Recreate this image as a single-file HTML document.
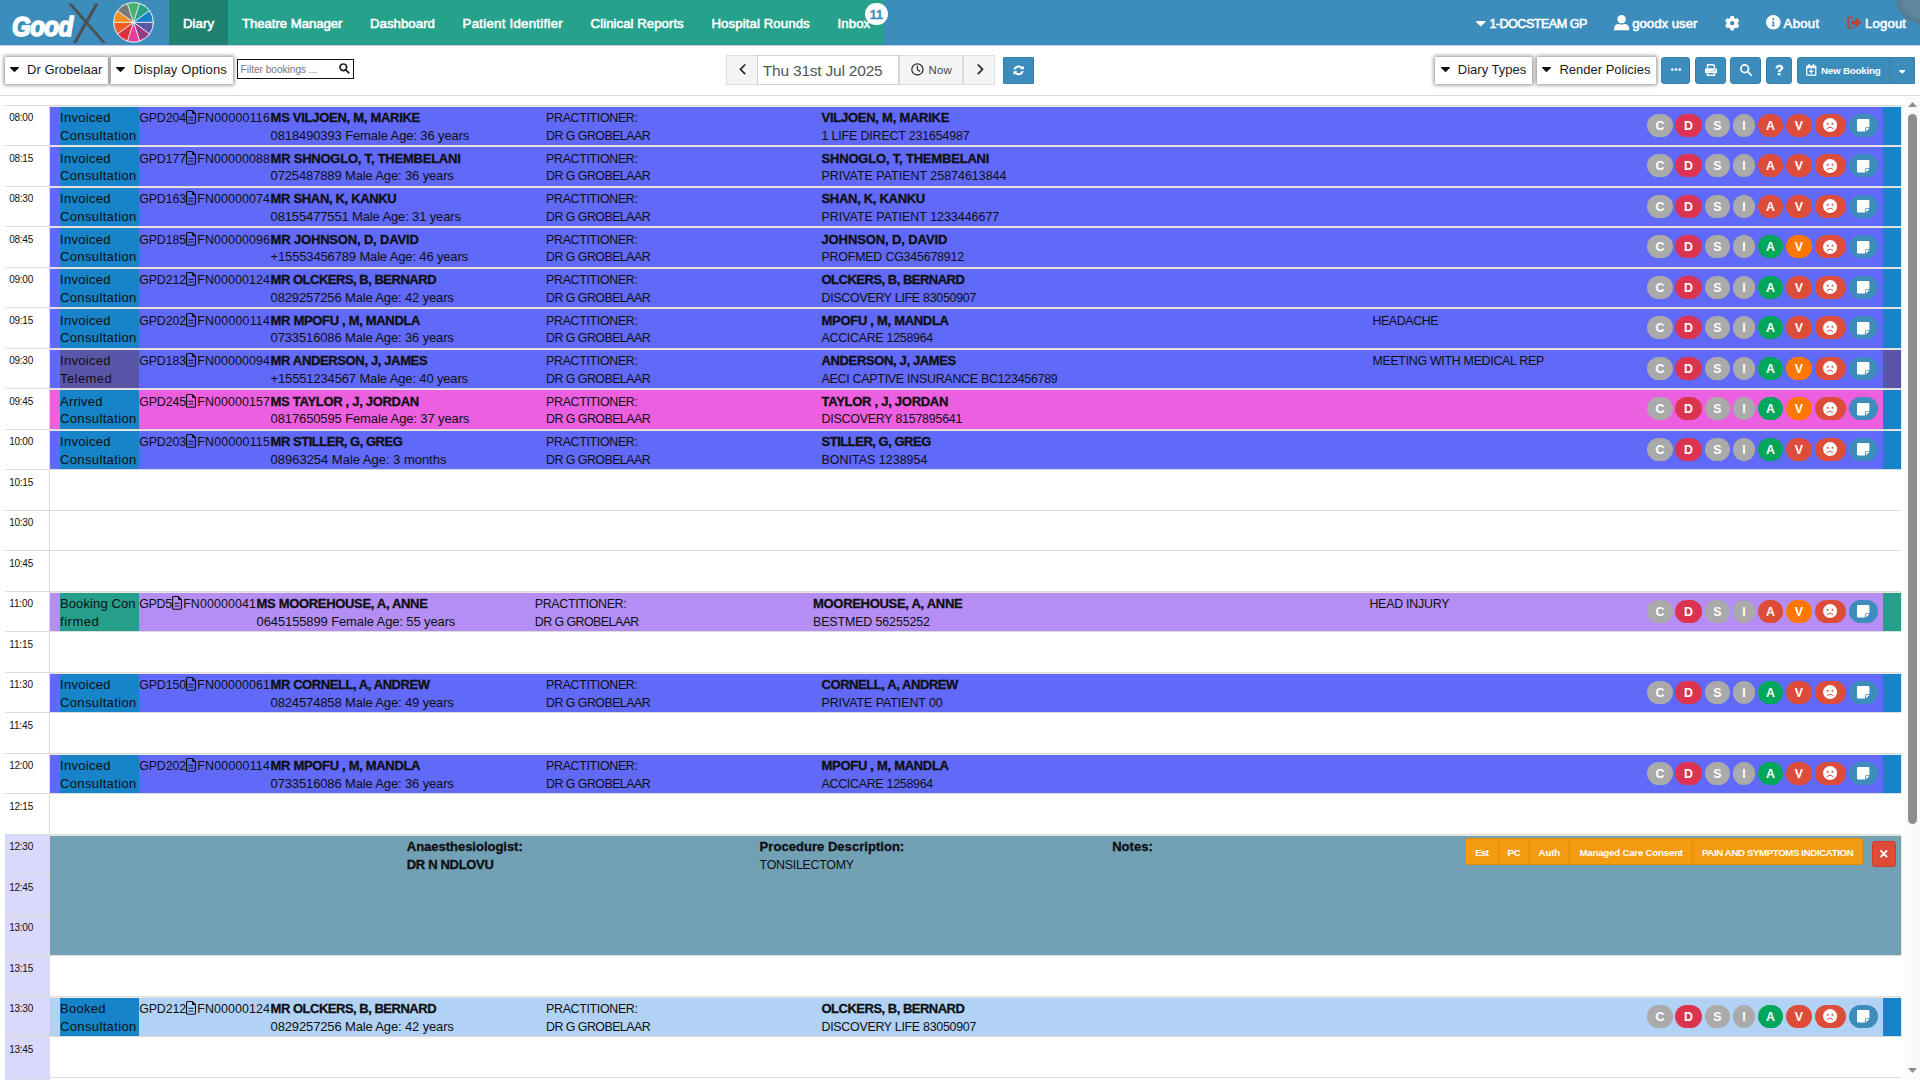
<!DOCTYPE html>
<html lang="en"><head><meta charset="utf-8"><title>GoodX Diary</title>
<style>
html,body{margin:0;padding:0;overflow:hidden}
body{width:1920px;height:1080px;overflow:hidden;position:relative;background:#fff;font-family:"Liberation Sans",sans-serif;color:#0e0f12}
.t{position:absolute;white-space:nowrap;color:#0e0f12}
.b{font-weight:700;-webkit-text-stroke:.3px currentColor}
.w{color:#fff}
svg{position:absolute;overflow:visible}
.dd{position:absolute;background:#fff;border-radius:0;box-shadow:0 0 4px 1px rgba(0,0,0,.45)}
.gb{position:absolute;background:#f4f4f4;border:1px solid #ddd;box-sizing:border-box}
.bb{position:absolute;background:#3c8dbc;border:1px solid #367fa9;box-sizing:border-box;border-radius:3px}
.bd{position:absolute;border-radius:11.5px;height:23px;line-height:24.6px;text-align:center;color:#fff;font-weight:700;font-size:12.4px}
.ob{position:absolute;background:#f39c12;box-sizing:border-box;height:26.4px;top:838.4px;border-left:1px solid #d98a0c}
.sb{-webkit-text-stroke:.55px currentColor}
.ns{-webkit-text-stroke:0}

</style></head>
<body>
<header class="main-header">
<div style="position:absolute;left:0.0px;top:0.0px;width:1920.0px;height:45.0px;background:#3c8dbc;"></div>
<div style="position:absolute;left:0.0px;top:45.0px;width:1920.0px;height:1.0px;background:#c9c4ee;"></div>
<div style="position:absolute;left:169.0px;top:0.0px;width:715.0px;height:45.0px;background:#26a28c;"></div>
<div style="position:absolute;left:169.0px;top:0.0px;width:59.0px;height:45.0px;background:#1f8270;"></div>
<div style="position:absolute;left:1894.5px;top:-29.5px;width:55px;height:54px;border-radius:50%;background:radial-gradient(closest-side,rgba(128,128,128,.5) 0,rgba(128,128,128,.5) 70%,rgba(105,112,122,.62) 88%,rgba(100,110,122,.55) 94%,rgba(100,110,122,0) 100%)"></div>
<span class="lg" style="position:absolute;left:11.5px;top:10.5px;font:italic 700 27.5px/32px 'Liberation Sans',sans-serif;color:#fff;letter-spacing:-0.5px;-webkit-text-stroke:1.7px #fff;white-space:nowrap;transform:scaleX(.87);transform-origin:0 0">Good</span>
<span class="lgx" style="position:absolute;left:68px;top:-5.5px;font:200 54px/60px 'DejaVu Sans Light','DejaVu Sans',sans-serif;color:#4d4f52;-webkit-text-stroke:.2px #4d4f52;white-space:nowrap;transform:skewX(9deg) scaleX(1.06);transform-origin:50% 50%">X</span>
<svg style="left:0;top:0" width="170" height="45"><circle cx="133.5" cy="22.3" r="20.25" fill="#dfe6ec"/><path d="M133.5 22.3L153.20 22.30A19.7 19.7 0 0 1 149.44 33.88Z" fill="#5b57a7" stroke="#e3e9ef" stroke-width=".85"/><path d="M133.5 22.3L149.44 33.88A19.7 19.7 0 0 1 139.59 41.04Z" fill="#9b3b84" stroke="#e3e9ef" stroke-width=".85"/><path d="M133.5 22.3L139.59 41.04A19.7 19.7 0 0 1 127.41 41.04Z" fill="#e83a97" stroke="#e3e9ef" stroke-width=".85"/><path d="M133.5 22.3L127.41 41.04A19.7 19.7 0 0 1 117.56 33.88Z" fill="#e0313f" stroke="#e3e9ef" stroke-width=".85"/><path d="M133.5 22.3L117.56 33.88A19.7 19.7 0 0 1 113.80 22.30Z" fill="#f15b22" stroke="#e3e9ef" stroke-width=".85"/><path d="M133.5 22.3L113.80 22.30A19.7 19.7 0 0 1 117.56 10.72Z" fill="#f29120" stroke="#e3e9ef" stroke-width=".85"/><path d="M133.5 22.3L117.56 10.72A19.7 19.7 0 0 1 127.41 3.56Z" fill="#787878" stroke="#e3e9ef" stroke-width=".85"/><path d="M133.5 22.3L127.41 3.56A19.7 19.7 0 0 1 139.59 3.56Z" fill="#46b36a" stroke="#e3e9ef" stroke-width=".85"/><path d="M133.5 22.3L139.59 3.56A19.7 19.7 0 0 1 149.44 10.72Z" fill="#27a189" stroke="#e3e9ef" stroke-width=".85"/><path d="M133.5 22.3L149.44 10.72A19.7 19.7 0 0 1 153.20 22.30Z" fill="#1681c9" stroke="#e3e9ef" stroke-width=".85"/><circle cx="133.5" cy="22.3" r="1.6" fill="#dfe6ec"/></svg>
<span class="t sb" style="left:183.0px;top:15.6px;font-size:13.2px;line-height:15px;letter-spacing:0.08px;color:#fff;">Diary</span>
<span class="t sb" style="left:242.0px;top:15.6px;font-size:13.2px;line-height:15px;letter-spacing:-0.05px;color:#fff;">Theatre Manager</span>
<span class="t sb" style="left:370.0px;top:15.6px;font-size:13.2px;line-height:15px;letter-spacing:0.05px;color:#fff;">Dashboard</span>
<span class="t sb" style="left:462.6px;top:15.6px;font-size:13.2px;line-height:15px;letter-spacing:0.28px;color:#fff;">Patient Identifier</span>
<span class="t sb" style="left:590.6px;top:15.6px;font-size:13.2px;line-height:15px;letter-spacing:0.05px;color:#fff;">Clinical Reports</span>
<span class="t sb" style="left:711.5px;top:15.6px;font-size:13.2px;line-height:15px;letter-spacing:0.10px;color:#fff;">Hospital Rounds</span>
<span class="t sb" style="left:837.5px;top:15.6px;font-size:13.2px;line-height:15px;letter-spacing:0.11px;color:#fff;">Inbox</span>
<div style="position:absolute;left:865.1px;top:2.6px;width:22.6px;height:22.6px;border-radius:50%;background:#fff"></div>
<span class="t b" style="left:869.7px;top:7.6px;font-size:12.6px;line-height:14px;letter-spacing:0.04px;color:#3c8dbc;">11</span>
<span class="t sb" style="left:1489.4px;top:16.6px;font-size:12.6px;line-height:14px;letter-spacing:-0.53px;color:#fff;">1-DOCSTEAM GP</span>
<span class="t sb" style="left:1632.2px;top:15.6px;font-size:13.2px;line-height:15px;letter-spacing:0.00px;color:#fff;">goodx user</span>
<span class="t sb" style="left:1783.6px;top:15.6px;font-size:13.2px;line-height:15px;letter-spacing:0.27px;color:#fff;">About</span>
<span class="t sb" style="left:1865.0px;top:15.6px;font-size:13.2px;line-height:15px;letter-spacing:0.14px;color:#fff;">Logout</span>
<svg style="left:1476.4px;top:20.6px" width="9.6" height="5.4" viewBox="0 0 10 5.6"><path d="M.6 0h8.8a.6.6 0 0 1 .45 1L5.5 5.3a.7.7 0 0 1-1 0L.15 1A.6.6 0 0 1 .6 0z" fill="#fff"/></svg>
<svg style="left:1614.4px;top:15.2px" width="15.2" height="15.2" viewBox="0 0 16 16"><circle cx="8" cy="4.4" r="4.4" fill="#fff"/><path d="M0 16v-1.6C0 11.6 2.2 9.6 4.8 9.6h.7a6 6 0 0 0 5 0h.7c2.600 0 4.800 2 4.800 4.800V16z" fill="#fff"/></svg>
<svg style="left:1724.9px;top:15.6px" width="14.4" height="14.4" viewBox="-8 -8 16 16"><g fill="#fff"><rect x="-2.1" y="-8" width="4.2" height="5" rx=".9" transform="rotate(0)"/><rect x="-2.1" y="-8" width="4.2" height="5" rx=".9" transform="rotate(60)"/><rect x="-2.1" y="-8" width="4.2" height="5" rx=".9" transform="rotate(120)"/><rect x="-2.1" y="-8" width="4.2" height="5" rx=".9" transform="rotate(180)"/><rect x="-2.1" y="-8" width="4.2" height="5" rx=".9" transform="rotate(240)"/><rect x="-2.1" y="-8" width="4.2" height="5" rx=".9" transform="rotate(300)"/><path fill-rule="evenodd" d="M0-6.400A6.400 6.400 0 1 0 0 6.400 6.400 6.400 0 1 0 0-6.400zM0-2.400A2.400 2.400 0 1 1 0 2.400 2.400 2.400 0 1 1 0-2.400z"/></g></svg>
<svg style="left:1766px;top:15.3px" width="14.6" height="14.6" viewBox="0 0 16 16"><circle cx="8" cy="8" r="8" fill="#fff"/><circle cx="8" cy="4.500" r="1.150" fill="#3c8dbc"/><path d="M6.600 7h2.300v4.200h.8v1.200H6.400v-1.200h.8V8.200h-.6z" fill="#3c8dbc"/></svg>
<svg style="left:1846.6px;top:16.2px" width="14.4" height="13" viewBox="0 0 16 14"><path d="M5.600 1.200H3A1.800 1.800 0 0 0 1.200 3v8A1.800 1.800 0 0 0 3 12.800h2.600" fill="none" stroke="#c2403a" stroke-width="2" stroke-linecap="round"/><path d="M10.300 1.800L15.500 6.500a.7.700 0 0 1 0 1L10.300 12.200a.6.600 0 0 1-1-.5V9.300H5.600a.6.600 0 0 1-.6-.6V5.300a.6.600 0 0 1 .6-.6h3.700V2.300a.6.600 0 0 1 1-.5z" fill="#c2403a"/></svg>
</header>
<section class="diary-toolbar">
<div class="dd" style="left:5px;top:57px;width:103px;height:27px"></div>
<svg style="left:10.2px;top:67.2px" width="9" height="5.200" viewBox="0 0 10 5.6"><path d="M.6 0h8.8a.6.6 0 0 1 .45 1L5.500 5.300a.7.700 0 0 1-1 0L.15 1A.6.600 0 0 1 .6 0z" fill="#111"/></svg>
<span class="t" style="left:27.0px;top:62.2px;font-size:13px;line-height:15px;letter-spacing:0.02px;color:#1b1b1b;">Dr Grobelaar</span>
<div class="dd" style="left:111.2px;top:57px;width:121.8px;height:27px"></div>
<svg style="left:116.4px;top:67.2px" width="9" height="5.200" viewBox="0 0 10 5.6"><path d="M.6 0h8.8a.6.6 0 0 1 .45 1L5.500 5.300a.7.700 0 0 1-1 0L.15 1A.6.600 0 0 1 .6 0z" fill="#111"/></svg>
<span class="t" style="left:133.8px;top:62.2px;font-size:13px;line-height:15px;letter-spacing:0.14px;color:#1b1b1b;">Display Options</span>
<div class="dd" style="left:1434.8px;top:57px;width:97.2px;height:27px"></div>
<svg style="left:1441.4px;top:67.2px" width="9" height="5.200" viewBox="0 0 10 5.6"><path d="M.6 0h8.8a.6.6 0 0 1 .45 1L5.500 5.300a.7.700 0 0 1-1 0L.15 1A.6.600 0 0 1 .6 0z" fill="#111"/></svg>
<span class="t" style="left:1457.8px;top:62.2px;font-size:13px;line-height:15px;letter-spacing:-0.00px;color:#1b1b1b;">Diary Types</span>
<div class="dd" style="left:1537px;top:57px;width:119.2px;height:27px"></div>
<svg style="left:1542.4px;top:67.2px" width="9" height="5.200" viewBox="0 0 10 5.6"><path d="M.6 0h8.8a.6.6 0 0 1 .45 1L5.500 5.300a.7.700 0 0 1-1 0L.15 1A.6.600 0 0 1 .6 0z" fill="#111"/></svg>
<span class="t" style="left:1559.4px;top:62.2px;font-size:13px;line-height:15px;letter-spacing:-0.00px;color:#1b1b1b;">Render Policies</span>
<div style="position:absolute;left:237px;top:59.2px;width:117px;height:19.6px;border:1px solid #111;box-sizing:border-box;background:#fff"></div>
<span class="t" style="left:240.6px;top:63.6px;font-size:10.2px;line-height:11px;letter-spacing:-0.05px;color:#777;">Filter bookings ...</span>
<svg style="left:339px;top:63.4px" width="10.6" height="10.6" viewBox="0 0 16 16"><circle cx="6.500" cy="6.500" r="5" fill="none" stroke="#222" stroke-width="2.600"/><path d="M10.300 10.300L14.800 14.800" stroke="#222" stroke-width="2.800" stroke-linecap="round"/></svg>
<div class="gb" style="left:726.2px;top:55px;width:31.6px;height:30.4px"></div>
<div style="position:absolute;left:756.8px;top:55px;width:142px;height:30.4px;border:1px solid #cfcfcf;box-sizing:border-box;background:#fff"></div>
<div class="gb" style="left:899px;top:55px;width:64px;height:30.4px"></div>
<div class="gb" style="left:963px;top:55px;width:32.200px;height:30.4px"></div>
<svg style="left:738.6px;top:64px" width="7" height="10.6" viewBox="0 0 7 10.6"><path d="M5.700 1L1.500 5.300L5.700 9.600" fill="none" stroke="#2a2a2a" stroke-width="1.750" stroke-linecap="round" stroke-linejoin="miter"/></svg>
<svg style="left:976.6px;top:64px" width="7" height="10.6" viewBox="0 0 7 10.6"><path d="M1.300 1L5.500 5.300L1.300 9.600" fill="none" stroke="#2a2a2a" stroke-width="1.750" stroke-linecap="round" stroke-linejoin="miter"/></svg>
<span class="t" style="left:762.8px;top:61.6px;font-size:15.5px;line-height:17px;letter-spacing:-0.21px;color:#555;">Thu 31st Jul 2025</span>
<svg style="left:910.8px;top:63.2px" width="12.8" height="12.800" viewBox="0 0 16 16"><circle cx="8" cy="8" r="7" fill="none" stroke="#333" stroke-width="1.600"/><path d="M8 3.800V8.300L10.800 10.300" fill="none" stroke="#333" stroke-width="1.600" stroke-linecap="round"/></svg>
<span class="t" style="left:928.6px;top:64.0px;font-size:11.4px;line-height:12px;letter-spacing:0.20px;color:#444;">Now</span>
<div class="bb" style="left:1003.2px;top:57.1px;width:31px;height:26.7px;border-radius:1px"></div>
<svg style="left:1013.2px;top:64.6px" width="11.400" height="10.600" viewBox="0 0 16 16" preserveAspectRatio="none"><path d="M2.300 6.800A5.900 5.900 0 0 1 12.500 4.200" fill="none" stroke="#fff" stroke-width="3"/><path d="M15.300 1v5.600H9.700z" fill="#fff"/><path d="M13.700 9.200A5.900 5.900 0 0 1 3.500 11.800" fill="none" stroke="#fff" stroke-width="3"/><path d="M.7 15V9.400H6.300z" fill="#fff"/></svg>
<div class="bb" style="left:1661.4px;top:57px;width:28.2px;height:27px"></div>
<div class="bb" style="left:1695.2px;top:57px;width:30.4px;height:27px"></div>
<div class="bb" style="left:1730px;top:57px;width:30.6px;height:27px"></div>
<div class="bb" style="left:1766px;top:57px;width:25.6px;height:27px"></div>
<div class="bb" style="left:1797px;top:57px;width:117.800px;height:27px;border-radius:3px 0 0 3px"></div>
<div style="position:absolute;left:1889.0px;top:57.0px;width:1.0px;height:27.0px;background:#367fa9;"></div>
<svg style="left:1670.8px;top:68.1px" width="10.200" height="3" viewBox="0 0 10.200 3"><circle cx="1.400" cy="1.500" r="1.350" fill="#fff"/><circle cx="5.100" cy="1.500" r="1.350" fill="#fff"/><circle cx="8.800" cy="1.500" r="1.350" fill="#fff"/></svg>
<svg style="left:1704.8px;top:64px" width="12" height="12" viewBox="0 0 16 16"><path d="M3.400 5V1h7.700l1.500 1.500V5" fill="none" stroke="#fff" stroke-width="2"/><path d="M1.800 5.600h12.400A1.800 1.800 0 0 1 16 7.400v4.400a.6.600 0 0 1-.6.600H13.500V10h-11v2.400H.6a.6.600 0 0 1-.6-.6V7.400A1.800 1.800 0 0 1 1.800 5.600z" fill="#fff"/><path d="M3.400 11h9.200v4H3.400z" fill="none" stroke="#fff" stroke-width="2"/><circle cx="13.300" cy="8" r=".9" fill="#3c8dbc"/></svg>
<svg style="left:1740px;top:64px" width="12" height="12" viewBox="0 0 16 16"><circle cx="6.300" cy="6.300" r="5.100" fill="none" stroke="#fff" stroke-width="2.300"/><path d="M10.200 10.200L15 15" stroke="#fff" stroke-width="2.300" stroke-linecap="round"/></svg>
<span class="t b" style="left:1775.1px;top:62.1px;font-size:14.2px;line-height:16px;letter-spacing:-1.07px;color:#fff;">?</span>
<svg style="left:1806.2px;top:64.1px" width="10.500" height="11.800" viewBox="0 0 14 16"><path fill-rule="evenodd" d="M3 0h2v2h4V0h2v2h1.500A1.500 1.500 0 0 1 14 3.500v11A1.500 1.500 0 0 1 12.500 16h-11A1.500 1.500 0 0 1 0 14.500v-11A1.500 1.500 0 0 1 1.500 2H3zM1.700 5.700v8.600h10.600V5.700zM6.100 7h1.800v2.100H10v1.800H7.900V13H6.100v-2.100H4V9.100h2.100z" fill="#fff"/></svg>
<span class="t b ns" style="left:1821.0px;top:65.0px;font-size:9.8px;line-height:11px;letter-spacing:-0.22px;color:#fff;">New Booking</span>
<svg style="left:1898.8px;top:69.8px" width="6.400" height="3.600" viewBox="0 0 10 5.600"><path d="M.6 0h8.800a.6.600 0 0 1 .45 1L5.500 5.300a.7.700 0 0 1-1 0L.15 1A.6.600 0 0 1 .6 0z" fill="#fff"/></svg>
<div style="position:absolute;left:0.0px;top:95.0px;width:1920.0px;height:1.0px;background:#dcdcdc;"></div>
</section>
<main class="diary-grid">
<div style="position:absolute;left:5.0px;top:834.0px;width:45.0px;height:246.0px;background:#d9d8fd;"></div>
<div style="position:absolute;left:49.2px;top:105.0px;width:1.0px;height:975.0px;background:#dadad8;"></div>
<div style="position:absolute;left:5.0px;top:105.0px;width:1896.0px;height:1.0px;background:#dcdcdc;"></div>
<span class="t" style="left:9.2px;top:112.2px;font-size:10px;line-height:11px;letter-spacing:-0.25px;color:#111;">08:00</span>
<div style="position:absolute;left:5.0px;top:145.0px;width:1896.0px;height:1.0px;background:#dcdcdc;"></div>
<span class="t" style="left:9.2px;top:153.2px;font-size:10px;line-height:11px;letter-spacing:-0.25px;color:#111;">08:15</span>
<div style="position:absolute;left:5.0px;top:186.0px;width:1896.0px;height:1.0px;background:#dcdcdc;"></div>
<span class="t" style="left:9.2px;top:193.2px;font-size:10px;line-height:11px;letter-spacing:-0.25px;color:#111;">08:30</span>
<div style="position:absolute;left:5.0px;top:226.0px;width:1896.0px;height:1.0px;background:#dcdcdc;"></div>
<span class="t" style="left:9.2px;top:234.2px;font-size:10px;line-height:11px;letter-spacing:-0.25px;color:#111;">08:45</span>
<div style="position:absolute;left:5.0px;top:267.0px;width:1896.0px;height:1.0px;background:#dcdcdc;"></div>
<span class="t" style="left:9.2px;top:274.2px;font-size:10px;line-height:11px;letter-spacing:-0.25px;color:#111;">09:00</span>
<div style="position:absolute;left:5.0px;top:307.0px;width:1896.0px;height:1.0px;background:#dcdcdc;"></div>
<span class="t" style="left:9.2px;top:315.2px;font-size:10px;line-height:11px;letter-spacing:-0.25px;color:#111;">09:15</span>
<div style="position:absolute;left:5.0px;top:348.0px;width:1896.0px;height:1.0px;background:#dcdcdc;"></div>
<span class="t" style="left:9.2px;top:355.2px;font-size:10px;line-height:11px;letter-spacing:-0.25px;color:#111;">09:30</span>
<div style="position:absolute;left:5.0px;top:388.0px;width:1896.0px;height:1.0px;background:#dcdcdc;"></div>
<span class="t" style="left:9.2px;top:396.2px;font-size:10px;line-height:11px;letter-spacing:-0.25px;color:#111;">09:45</span>
<div style="position:absolute;left:5.0px;top:429.0px;width:1896.0px;height:1.0px;background:#dcdcdc;"></div>
<span class="t" style="left:9.2px;top:436.2px;font-size:10px;line-height:11px;letter-spacing:-0.25px;color:#111;">10:00</span>
<div style="position:absolute;left:5.0px;top:469.0px;width:1896.0px;height:1.0px;background:#dcdcdc;"></div>
<span class="t" style="left:9.2px;top:477.2px;font-size:10px;line-height:11px;letter-spacing:-0.25px;color:#111;">10:15</span>
<div style="position:absolute;left:5.0px;top:510.0px;width:1896.0px;height:1.0px;background:#dcdcdc;"></div>
<span class="t" style="left:9.2px;top:517.2px;font-size:10px;line-height:11px;letter-spacing:-0.25px;color:#111;">10:30</span>
<div style="position:absolute;left:5.0px;top:550.0px;width:1896.0px;height:1.0px;background:#dcdcdc;"></div>
<span class="t" style="left:9.2px;top:558.2px;font-size:10px;line-height:11px;letter-spacing:-0.25px;color:#111;">10:45</span>
<div style="position:absolute;left:5.0px;top:591.0px;width:1896.0px;height:1.0px;background:#dcdcdc;"></div>
<span class="t" style="left:9.2px;top:598.2px;font-size:10px;line-height:11px;letter-spacing:-0.10px;color:#111;">11:00</span>
<div style="position:absolute;left:5.0px;top:631.0px;width:1896.0px;height:1.0px;background:#dcdcdc;"></div>
<span class="t" style="left:9.2px;top:639.2px;font-size:10px;line-height:11px;letter-spacing:-0.10px;color:#111;">11:15</span>
<div style="position:absolute;left:5.0px;top:672.0px;width:1896.0px;height:1.0px;background:#dcdcdc;"></div>
<span class="t" style="left:9.2px;top:679.2px;font-size:10px;line-height:11px;letter-spacing:-0.10px;color:#111;">11:30</span>
<div style="position:absolute;left:5.0px;top:712.0px;width:1896.0px;height:1.0px;background:#dcdcdc;"></div>
<span class="t" style="left:9.2px;top:720.2px;font-size:10px;line-height:11px;letter-spacing:-0.10px;color:#111;">11:45</span>
<div style="position:absolute;left:5.0px;top:753.0px;width:1896.0px;height:1.0px;background:#dcdcdc;"></div>
<span class="t" style="left:9.2px;top:760.2px;font-size:10px;line-height:11px;letter-spacing:-0.25px;color:#111;">12:00</span>
<div style="position:absolute;left:5.0px;top:793.0px;width:1896.0px;height:1.0px;background:#dcdcdc;"></div>
<span class="t" style="left:9.2px;top:801.2px;font-size:10px;line-height:11px;letter-spacing:-0.25px;color:#111;">12:15</span>
<div style="position:absolute;left:5.0px;top:834.0px;width:1896.0px;height:1.0px;background:#dcdcdc;"></div>
<span class="t" style="left:9.2px;top:841.2px;font-size:10px;line-height:11px;letter-spacing:-0.25px;color:#111;">12:30</span>
<div style="position:absolute;left:5.0px;top:874.0px;width:1896.0px;height:1.0px;background:#dcdcdc;"></div>
<span class="t" style="left:9.2px;top:882.2px;font-size:10px;line-height:11px;letter-spacing:-0.25px;color:#111;">12:45</span>
<div style="position:absolute;left:5.0px;top:915.0px;width:1896.0px;height:1.0px;background:#dcdcdc;"></div>
<span class="t" style="left:9.2px;top:922.2px;font-size:10px;line-height:11px;letter-spacing:-0.25px;color:#111;">13:00</span>
<div style="position:absolute;left:5.0px;top:955.0px;width:1896.0px;height:1.0px;background:#dcdcdc;"></div>
<span class="t" style="left:9.2px;top:963.2px;font-size:10px;line-height:11px;letter-spacing:-0.25px;color:#111;">13:15</span>
<div style="position:absolute;left:5.0px;top:996.0px;width:1896.0px;height:1.0px;background:#dcdcdc;"></div>
<span class="t" style="left:9.2px;top:1003.2px;font-size:10px;line-height:11px;letter-spacing:-0.25px;color:#111;">13:30</span>
<div style="position:absolute;left:5.0px;top:1036.0px;width:1896.0px;height:1.0px;background:#dcdcdc;"></div>
<span class="t" style="left:9.2px;top:1044.2px;font-size:10px;line-height:11px;letter-spacing:-0.25px;color:#111;">13:45</span>
<div style="position:absolute;left:5.0px;top:1077.0px;width:1896.0px;height:1.0px;background:#dcdcdc;"></div>
<div style="position:absolute;left:50.0px;top:106.0px;width:1852.0px;height:39.0px;background:#ece7df;"></div>
<div style="position:absolute;left:50.0px;top:105.0px;width:1851.0px;height:1.0px;background:#dcdcdc;"></div>
<div style="position:absolute;left:50.0px;top:107.0px;width:1851.0px;height:38.0px;background:#6069f8;"></div>
<div style="position:absolute;left:60.0px;top:107.0px;width:79.0px;height:38.0px;background:#1783c9;"></div>
<div style="position:absolute;left:1883.0px;top:107.0px;width:18.0px;height:38.0px;background:#1783c9;"></div>
<span class="t" style="left:60.0px;top:110.4px;font-size:13px;line-height:15px;letter-spacing:0.29px;">Invoiced</span>
<span class="t" style="left:60.0px;top:128.4px;font-size:13px;line-height:15px;letter-spacing:0.36px;">Consultation</span>
<span class="t" style="left:139.2px;top:111.4px;font-size:12.4px;line-height:14px;letter-spacing:-0.13px;">GPD204</span>
<svg style="left:185.7px;top:110.0px" width="10" height="13.800" viewBox="0 0 10 13.800"><path d="M1.700.55H6.300L9.450 3.700V12.100a1.150 1.150 0 0 1-1.150 1.150H1.700A1.150 1.150 0 0 1 .55 12.100V1.700A1.150 1.150 0 0 1 1.700.55z" fill="none" stroke="#0e0f12" stroke-width="1.100"/><path d="M6.100.4L9.600 3.900H6.100z" fill="#0e0f12"/><path d="M2.500 7.300h5" stroke="#0e0f12" stroke-width="1"/><path d="M2.500 10.100h5" stroke="#0e0f12" stroke-opacity=".6" stroke-width="1.400"/></svg>
<span class="t" style="left:197.3px;top:111.4px;font-size:12.4px;line-height:14px;letter-spacing:0.20px;">FN00000116</span>
<span class="t b" style="left:270.6px;top:110.4px;font-size:13px;line-height:15px;letter-spacing:-0.28px;">MS VILJOEN, M, MARIKE</span>
<span class="t" style="left:270.6px;top:128.4px;font-size:13px;line-height:15px;letter-spacing:-0.12px;">0818490393 Female Age: 36 years</span>
<span class="t" style="left:546.1px;top:111.4px;font-size:12.4px;line-height:14px;letter-spacing:-0.32px;">PRACTITIONER:</span>
<span class="t" style="left:546.1px;top:129.4px;font-size:12.4px;line-height:14px;letter-spacing:-0.54px;">DR G GROBELAAR</span>
<span class="t b" style="left:821.5px;top:110.4px;font-size:13px;line-height:15px;letter-spacing:-0.25px;">VILJOEN, M, MARIKE</span>
<span class="t" style="left:821.5px;top:129.4px;font-size:12.4px;line-height:14px;letter-spacing:-0.14px;">1 LIFE DIRECT 231654987</span>
<div class="bd" style="left:1647px;top:113.9px;width:26px;background:#aaaaaa">C</div>
<div class="bd" style="left:1675px;top:113.9px;width:27.1px;background:#dc3350">D</div>
<div class="bd" style="left:1704.8px;top:113.9px;width:25.2px;background:#aaaaaa">S</div>
<div class="bd" style="left:1732.9px;top:113.9px;width:22.3px;background:#aaaaaa">I</div>
<div class="bd" style="left:1757.9px;top:113.9px;width:25.3px;background:#dd4b39">A</div>
<div class="bd" style="left:1785.8px;top:113.9px;width:26.2px;background:#dd4b39">V</div>
<div class="bd" style="left:1815px;top:113.9px;width:30.9px;background:#dd4b39"></div>
<svg style="left:1823.0px;top:118.3px" width="14.200" height="14.200" viewBox="0 0 16 16"><circle cx="8" cy="8" r="7.900" fill="#fff"/><circle cx="5.300" cy="6.400" r="1.100" fill="#dd4b39"/><circle cx="10.700" cy="6.400" r="1.100" fill="#dd4b39"/><path d="M4.700 12.100A3.900 3.900 0 0 1 11.300 12.100" fill="none" stroke="#dd4b39" stroke-width="1.100" stroke-linecap="round"/></svg>
<div class="bd" style="left:1849.100px;top:113.9px;width:28.700px;background:#3c8dbc"></div>
<svg style="left:1857.0px;top:119.2px" width="12.400" height="12.400" viewBox="0 0 16 16"><path d="M1.600 0H14.400A1.600 1.600 0 0 1 16 1.600V10.500H12A1.500 1.500 0 0 0 10.500 12V16H1.600A1.600 1.600 0 0 1 0 14.400V1.600A1.600 1.600 0 0 1 1.600 0z" fill="#fff"/><path d="M11.600 16V12.200a.6.600 0 0 1 .6-.6H16z" fill="#fff"/></svg>
<div style="position:absolute;left:50.0px;top:146.0px;width:1852.0px;height:40.0px;background:#ece7df;"></div>
<div style="position:absolute;left:50.0px;top:145.0px;width:1851.0px;height:1.0px;background:#dcdcdc;"></div>
<div style="position:absolute;left:50.0px;top:147.0px;width:1851.0px;height:39.0px;background:#6069f8;"></div>
<div style="position:absolute;left:60.0px;top:147.0px;width:79.0px;height:39.0px;background:#1783c9;"></div>
<div style="position:absolute;left:1883.0px;top:147.0px;width:18.0px;height:39.0px;background:#1783c9;"></div>
<span class="t" style="left:60.0px;top:151.4px;font-size:13px;line-height:15px;letter-spacing:0.29px;">Invoiced</span>
<span class="t" style="left:60.0px;top:168.4px;font-size:13px;line-height:15px;letter-spacing:0.36px;">Consultation</span>
<span class="t" style="left:139.2px;top:152.4px;font-size:12.4px;line-height:14px;letter-spacing:-0.13px;">GPD177</span>
<svg style="left:185.7px;top:151.0px" width="10" height="13.800" viewBox="0 0 10 13.800"><path d="M1.700.55H6.300L9.450 3.700V12.100a1.150 1.150 0 0 1-1.150 1.150H1.700A1.150 1.150 0 0 1 .55 12.100V1.700A1.150 1.150 0 0 1 1.700.55z" fill="none" stroke="#0e0f12" stroke-width="1.100"/><path d="M6.100.4L9.600 3.900H6.100z" fill="#0e0f12"/><path d="M2.500 7.300h5" stroke="#0e0f12" stroke-width="1"/><path d="M2.500 10.100h5" stroke="#0e0f12" stroke-opacity=".6" stroke-width="1.400"/></svg>
<span class="t" style="left:197.3px;top:152.4px;font-size:12.4px;line-height:14px;letter-spacing:0.11px;">FN00000088</span>
<span class="t b" style="left:270.6px;top:151.4px;font-size:13px;line-height:15px;letter-spacing:-0.23px;">MR SHNOGLO, T, THEMBELANI</span>
<span class="t" style="left:270.6px;top:168.4px;font-size:13px;line-height:15px;letter-spacing:-0.14px;">0725487889 Male Age: 36 years</span>
<span class="t" style="left:546.1px;top:152.4px;font-size:12.4px;line-height:14px;letter-spacing:-0.32px;">PRACTITIONER:</span>
<span class="t" style="left:546.1px;top:169.4px;font-size:12.4px;line-height:14px;letter-spacing:-0.54px;">DR G GROBELAAR</span>
<span class="t b" style="left:821.5px;top:151.4px;font-size:13px;line-height:15px;letter-spacing:-0.19px;">SHNOGLO, T, THEMBELANI</span>
<span class="t" style="left:821.5px;top:169.4px;font-size:12.4px;line-height:14px;letter-spacing:0.03px;">PRIVATE PATIENT 25874613844</span>
<div class="bd" style="left:1647px;top:154.4px;width:26px;background:#aaaaaa">C</div>
<div class="bd" style="left:1675px;top:154.4px;width:27.1px;background:#dc3350">D</div>
<div class="bd" style="left:1704.8px;top:154.4px;width:25.2px;background:#aaaaaa">S</div>
<div class="bd" style="left:1732.9px;top:154.4px;width:22.3px;background:#aaaaaa">I</div>
<div class="bd" style="left:1757.9px;top:154.4px;width:25.3px;background:#dd4b39">A</div>
<div class="bd" style="left:1785.8px;top:154.4px;width:26.2px;background:#dd4b39">V</div>
<div class="bd" style="left:1815px;top:154.4px;width:30.9px;background:#dd4b39"></div>
<svg style="left:1823.0px;top:158.8px" width="14.200" height="14.200" viewBox="0 0 16 16"><circle cx="8" cy="8" r="7.900" fill="#fff"/><circle cx="5.300" cy="6.400" r="1.100" fill="#dd4b39"/><circle cx="10.700" cy="6.400" r="1.100" fill="#dd4b39"/><path d="M4.700 12.100A3.900 3.900 0 0 1 11.300 12.100" fill="none" stroke="#dd4b39" stroke-width="1.100" stroke-linecap="round"/></svg>
<div class="bd" style="left:1849.100px;top:154.4px;width:28.700px;background:#3c8dbc"></div>
<svg style="left:1857.0px;top:159.7px" width="12.400" height="12.400" viewBox="0 0 16 16"><path d="M1.600 0H14.400A1.600 1.600 0 0 1 16 1.600V10.500H12A1.500 1.500 0 0 0 10.500 12V16H1.600A1.600 1.600 0 0 1 0 14.400V1.600A1.600 1.600 0 0 1 1.600 0z" fill="#fff"/><path d="M11.600 16V12.200a.6.600 0 0 1 .6-.6H16z" fill="#fff"/></svg>
<div style="position:absolute;left:50.0px;top:187.0px;width:1852.0px;height:39.0px;background:#ece7df;"></div>
<div style="position:absolute;left:50.0px;top:186.0px;width:1851.0px;height:1.0px;background:#dcdcdc;"></div>
<div style="position:absolute;left:50.0px;top:188.0px;width:1851.0px;height:38.0px;background:#6069f8;"></div>
<div style="position:absolute;left:60.0px;top:188.0px;width:79.0px;height:38.0px;background:#1783c9;"></div>
<div style="position:absolute;left:1883.0px;top:188.0px;width:18.0px;height:38.0px;background:#1783c9;"></div>
<span class="t" style="left:60.0px;top:191.4px;font-size:13px;line-height:15px;letter-spacing:0.29px;">Invoiced</span>
<span class="t" style="left:60.0px;top:209.4px;font-size:13px;line-height:15px;letter-spacing:0.36px;">Consultation</span>
<span class="t" style="left:139.2px;top:192.4px;font-size:12.4px;line-height:14px;letter-spacing:-0.13px;">GPD163</span>
<svg style="left:185.7px;top:191.0px" width="10" height="13.800" viewBox="0 0 10 13.800"><path d="M1.700.55H6.300L9.450 3.700V12.100a1.150 1.150 0 0 1-1.150 1.150H1.700A1.150 1.150 0 0 1 .55 12.100V1.700A1.150 1.150 0 0 1 1.700.55z" fill="none" stroke="#0e0f12" stroke-width="1.100"/><path d="M6.100.4L9.600 3.900H6.100z" fill="#0e0f12"/><path d="M2.500 7.300h5" stroke="#0e0f12" stroke-width="1"/><path d="M2.500 10.100h5" stroke="#0e0f12" stroke-opacity=".6" stroke-width="1.400"/></svg>
<span class="t" style="left:197.3px;top:192.4px;font-size:12.4px;line-height:14px;letter-spacing:0.11px;">FN00000074</span>
<span class="t b" style="left:270.6px;top:191.4px;font-size:13px;line-height:15px;letter-spacing:-0.33px;">MR SHAN, K, KANKU</span>
<span class="t" style="left:270.6px;top:209.4px;font-size:13px;line-height:15px;letter-spacing:-0.14px;">08155477551 Male Age: 31 years</span>
<span class="t" style="left:546.1px;top:192.4px;font-size:12.4px;line-height:14px;letter-spacing:-0.32px;">PRACTITIONER:</span>
<span class="t" style="left:546.1px;top:210.4px;font-size:12.4px;line-height:14px;letter-spacing:-0.54px;">DR G GROBELAAR</span>
<span class="t b" style="left:821.5px;top:191.4px;font-size:13px;line-height:15px;letter-spacing:-0.30px;">SHAN, K, KANKU</span>
<span class="t" style="left:821.5px;top:210.4px;font-size:12.4px;line-height:14px;letter-spacing:0.02px;">PRIVATE PATIENT 1233446677</span>
<div class="bd" style="left:1647px;top:194.9px;width:26px;background:#aaaaaa">C</div>
<div class="bd" style="left:1675px;top:194.9px;width:27.1px;background:#dc3350">D</div>
<div class="bd" style="left:1704.8px;top:194.9px;width:25.2px;background:#aaaaaa">S</div>
<div class="bd" style="left:1732.9px;top:194.9px;width:22.3px;background:#aaaaaa">I</div>
<div class="bd" style="left:1757.9px;top:194.9px;width:25.3px;background:#dd4b39">A</div>
<div class="bd" style="left:1785.8px;top:194.9px;width:26.2px;background:#dd4b39">V</div>
<div class="bd" style="left:1815px;top:194.9px;width:30.9px;background:#dd4b39"></div>
<svg style="left:1823.0px;top:199.3px" width="14.200" height="14.200" viewBox="0 0 16 16"><circle cx="8" cy="8" r="7.900" fill="#fff"/><circle cx="5.300" cy="6.400" r="1.100" fill="#dd4b39"/><circle cx="10.700" cy="6.400" r="1.100" fill="#dd4b39"/><path d="M4.700 12.100A3.900 3.900 0 0 1 11.300 12.100" fill="none" stroke="#dd4b39" stroke-width="1.100" stroke-linecap="round"/></svg>
<div class="bd" style="left:1849.100px;top:194.9px;width:28.700px;background:#3c8dbc"></div>
<svg style="left:1857.0px;top:200.2px" width="12.400" height="12.400" viewBox="0 0 16 16"><path d="M1.600 0H14.400A1.600 1.600 0 0 1 16 1.600V10.500H12A1.500 1.500 0 0 0 10.500 12V16H1.600A1.600 1.600 0 0 1 0 14.400V1.600A1.600 1.600 0 0 1 1.600 0z" fill="#fff"/><path d="M11.600 16V12.200a.6.600 0 0 1 .6-.6H16z" fill="#fff"/></svg>
<div style="position:absolute;left:50.0px;top:227.0px;width:1852.0px;height:40.0px;background:#ece7df;"></div>
<div style="position:absolute;left:50.0px;top:226.0px;width:1851.0px;height:1.0px;background:#dcdcdc;"></div>
<div style="position:absolute;left:50.0px;top:228.0px;width:1851.0px;height:39.0px;background:#6069f8;"></div>
<div style="position:absolute;left:60.0px;top:228.0px;width:79.0px;height:39.0px;background:#1783c9;"></div>
<div style="position:absolute;left:1883.0px;top:228.0px;width:18.0px;height:39.0px;background:#1783c9;"></div>
<span class="t" style="left:60.0px;top:232.4px;font-size:13px;line-height:15px;letter-spacing:0.29px;">Invoiced</span>
<span class="t" style="left:60.0px;top:249.4px;font-size:13px;line-height:15px;letter-spacing:0.36px;">Consultation</span>
<span class="t" style="left:139.2px;top:233.4px;font-size:12.4px;line-height:14px;letter-spacing:-0.13px;">GPD185</span>
<svg style="left:185.7px;top:232.0px" width="10" height="13.800" viewBox="0 0 10 13.800"><path d="M1.700.55H6.300L9.450 3.700V12.100a1.150 1.150 0 0 1-1.150 1.150H1.700A1.150 1.150 0 0 1 .55 12.100V1.700A1.150 1.150 0 0 1 1.700.55z" fill="none" stroke="#0e0f12" stroke-width="1.100"/><path d="M6.100.4L9.600 3.900H6.100z" fill="#0e0f12"/><path d="M2.500 7.300h5" stroke="#0e0f12" stroke-width="1"/><path d="M2.500 10.100h5" stroke="#0e0f12" stroke-opacity=".6" stroke-width="1.400"/></svg>
<span class="t" style="left:197.3px;top:233.4px;font-size:12.4px;line-height:14px;letter-spacing:0.11px;">FN00000096</span>
<span class="t b" style="left:270.6px;top:232.4px;font-size:13px;line-height:15px;letter-spacing:-0.17px;">MR JOHNSON, D, DAVID</span>
<span class="t" style="left:270.6px;top:249.4px;font-size:13px;line-height:15px;letter-spacing:-0.15px;">+15553456789 Male Age: 46 years</span>
<span class="t" style="left:546.1px;top:233.4px;font-size:12.4px;line-height:14px;letter-spacing:-0.32px;">PRACTITIONER:</span>
<span class="t" style="left:546.1px;top:250.4px;font-size:12.4px;line-height:14px;letter-spacing:-0.54px;">DR G GROBELAAR</span>
<span class="t b" style="left:821.5px;top:232.4px;font-size:13px;line-height:15px;letter-spacing:-0.11px;">JOHNSON, D, DAVID</span>
<span class="t" style="left:821.5px;top:250.4px;font-size:12.4px;line-height:14px;letter-spacing:-0.19px;">PROFMED CG345678912</span>
<div class="bd" style="left:1647px;top:235.4px;width:26px;background:#aaaaaa">C</div>
<div class="bd" style="left:1675px;top:235.4px;width:27.1px;background:#dc3350">D</div>
<div class="bd" style="left:1704.8px;top:235.4px;width:25.2px;background:#aaaaaa">S</div>
<div class="bd" style="left:1732.9px;top:235.4px;width:22.3px;background:#aaaaaa">I</div>
<div class="bd" style="left:1757.9px;top:235.4px;width:25.3px;background:#00a65a">A</div>
<div class="bd" style="left:1785.8px;top:235.4px;width:26.2px;background:#ff7701">V</div>
<div class="bd" style="left:1815px;top:235.4px;width:30.9px;background:#dd4b39"></div>
<svg style="left:1823.0px;top:239.8px" width="14.200" height="14.200" viewBox="0 0 16 16"><circle cx="8" cy="8" r="7.900" fill="#fff"/><circle cx="5.300" cy="6.400" r="1.100" fill="#dd4b39"/><circle cx="10.700" cy="6.400" r="1.100" fill="#dd4b39"/><path d="M4.700 12.100A3.900 3.900 0 0 1 11.300 12.100" fill="none" stroke="#dd4b39" stroke-width="1.100" stroke-linecap="round"/></svg>
<div class="bd" style="left:1849.100px;top:235.4px;width:28.700px;background:#3c8dbc"></div>
<svg style="left:1857.0px;top:240.7px" width="12.400" height="12.400" viewBox="0 0 16 16"><path d="M1.600 0H14.400A1.600 1.600 0 0 1 16 1.600V10.500H12A1.500 1.500 0 0 0 10.500 12V16H1.600A1.600 1.600 0 0 1 0 14.400V1.600A1.600 1.600 0 0 1 1.600 0z" fill="#fff"/><path d="M11.600 16V12.200a.6.600 0 0 1 .6-.6H16z" fill="#fff"/></svg>
<div style="position:absolute;left:50.0px;top:268.0px;width:1852.0px;height:39.0px;background:#ece7df;"></div>
<div style="position:absolute;left:50.0px;top:267.0px;width:1851.0px;height:1.0px;background:#dcdcdc;"></div>
<div style="position:absolute;left:50.0px;top:269.0px;width:1851.0px;height:38.0px;background:#6069f8;"></div>
<div style="position:absolute;left:60.0px;top:269.0px;width:79.0px;height:38.0px;background:#1783c9;"></div>
<div style="position:absolute;left:1883.0px;top:269.0px;width:18.0px;height:38.0px;background:#1783c9;"></div>
<span class="t" style="left:60.0px;top:272.4px;font-size:13px;line-height:15px;letter-spacing:0.29px;">Invoiced</span>
<span class="t" style="left:60.0px;top:290.4px;font-size:13px;line-height:15px;letter-spacing:0.36px;">Consultation</span>
<span class="t" style="left:139.2px;top:273.4px;font-size:12.4px;line-height:14px;letter-spacing:-0.13px;">GPD212</span>
<svg style="left:185.7px;top:272.0px" width="10" height="13.800" viewBox="0 0 10 13.800"><path d="M1.700.55H6.300L9.450 3.700V12.100a1.150 1.150 0 0 1-1.150 1.150H1.700A1.150 1.150 0 0 1 .55 12.100V1.700A1.150 1.150 0 0 1 1.700.55z" fill="none" stroke="#0e0f12" stroke-width="1.100"/><path d="M6.100.4L9.600 3.900H6.100z" fill="#0e0f12"/><path d="M2.500 7.300h5" stroke="#0e0f12" stroke-width="1"/><path d="M2.500 10.100h5" stroke="#0e0f12" stroke-opacity=".6" stroke-width="1.400"/></svg>
<span class="t" style="left:197.3px;top:273.4px;font-size:12.4px;line-height:14px;letter-spacing:0.11px;">FN00000124</span>
<span class="t b" style="left:270.6px;top:272.4px;font-size:13px;line-height:15px;letter-spacing:-0.49px;">MR OLCKERS, B, BERNARD</span>
<span class="t" style="left:270.6px;top:290.4px;font-size:13px;line-height:15px;letter-spacing:-0.14px;">0829257256 Male Age: 42 years</span>
<span class="t" style="left:546.1px;top:273.4px;font-size:12.4px;line-height:14px;letter-spacing:-0.32px;">PRACTITIONER:</span>
<span class="t" style="left:546.1px;top:291.4px;font-size:12.4px;line-height:14px;letter-spacing:-0.54px;">DR G GROBELAAR</span>
<span class="t b" style="left:821.5px;top:272.4px;font-size:13px;line-height:15px;letter-spacing:-0.50px;">OLCKERS, B, BERNARD</span>
<span class="t" style="left:821.5px;top:291.4px;font-size:12.4px;line-height:14px;letter-spacing:-0.27px;">DISCOVERY LIFE 83050907</span>
<div class="bd" style="left:1647px;top:275.9px;width:26px;background:#aaaaaa">C</div>
<div class="bd" style="left:1675px;top:275.9px;width:27.1px;background:#dc3350">D</div>
<div class="bd" style="left:1704.8px;top:275.9px;width:25.2px;background:#aaaaaa">S</div>
<div class="bd" style="left:1732.9px;top:275.9px;width:22.3px;background:#aaaaaa">I</div>
<div class="bd" style="left:1757.9px;top:275.9px;width:25.3px;background:#00a65a">A</div>
<div class="bd" style="left:1785.8px;top:275.9px;width:26.2px;background:#dd4b39">V</div>
<div class="bd" style="left:1815px;top:275.9px;width:30.9px;background:#dd4b39"></div>
<svg style="left:1823.0px;top:280.3px" width="14.200" height="14.200" viewBox="0 0 16 16"><circle cx="8" cy="8" r="7.900" fill="#fff"/><circle cx="5.300" cy="6.400" r="1.100" fill="#dd4b39"/><circle cx="10.700" cy="6.400" r="1.100" fill="#dd4b39"/><path d="M4.700 12.100A3.900 3.900 0 0 1 11.300 12.100" fill="none" stroke="#dd4b39" stroke-width="1.100" stroke-linecap="round"/></svg>
<div class="bd" style="left:1849.100px;top:275.9px;width:28.700px;background:#3c8dbc"></div>
<svg style="left:1857.0px;top:281.2px" width="12.400" height="12.400" viewBox="0 0 16 16"><path d="M1.600 0H14.400A1.600 1.600 0 0 1 16 1.600V10.500H12A1.500 1.500 0 0 0 10.500 12V16H1.600A1.600 1.600 0 0 1 0 14.400V1.600A1.600 1.600 0 0 1 1.600 0z" fill="#fff"/><path d="M11.600 16V12.200a.6.600 0 0 1 .6-.6H16z" fill="#fff"/></svg>
<div style="position:absolute;left:50.0px;top:308.0px;width:1852.0px;height:40.0px;background:#ece7df;"></div>
<div style="position:absolute;left:50.0px;top:307.0px;width:1851.0px;height:1.0px;background:#dcdcdc;"></div>
<div style="position:absolute;left:50.0px;top:309.0px;width:1851.0px;height:39.0px;background:#6069f8;"></div>
<div style="position:absolute;left:60.0px;top:309.0px;width:79.0px;height:39.0px;background:#1783c9;"></div>
<div style="position:absolute;left:1883.0px;top:309.0px;width:18.0px;height:39.0px;background:#1783c9;"></div>
<span class="t" style="left:60.0px;top:313.4px;font-size:13px;line-height:15px;letter-spacing:0.29px;">Invoiced</span>
<span class="t" style="left:60.0px;top:330.4px;font-size:13px;line-height:15px;letter-spacing:0.36px;">Consultation</span>
<span class="t" style="left:139.2px;top:314.4px;font-size:12.4px;line-height:14px;letter-spacing:-0.13px;">GPD202</span>
<svg style="left:185.7px;top:313.0px" width="10" height="13.800" viewBox="0 0 10 13.800"><path d="M1.700.55H6.300L9.450 3.700V12.100a1.150 1.150 0 0 1-1.150 1.150H1.700A1.150 1.150 0 0 1 .55 12.100V1.700A1.150 1.150 0 0 1 1.700.55z" fill="none" stroke="#0e0f12" stroke-width="1.100"/><path d="M6.100.4L9.600 3.900H6.100z" fill="#0e0f12"/><path d="M2.500 7.300h5" stroke="#0e0f12" stroke-width="1"/><path d="M2.500 10.100h5" stroke="#0e0f12" stroke-opacity=".6" stroke-width="1.400"/></svg>
<span class="t" style="left:197.3px;top:314.4px;font-size:12.4px;line-height:14px;letter-spacing:0.20px;">FN00000114</span>
<span class="t b" style="left:270.6px;top:313.4px;font-size:13px;line-height:15px;letter-spacing:-0.32px;">MR MPOFU , M, MANDLA</span>
<span class="t" style="left:270.6px;top:330.4px;font-size:13px;line-height:15px;letter-spacing:-0.14px;">0733516086 Male Age: 36 years</span>
<span class="t" style="left:546.1px;top:314.4px;font-size:12.4px;line-height:14px;letter-spacing:-0.32px;">PRACTITIONER:</span>
<span class="t" style="left:546.1px;top:331.4px;font-size:12.4px;line-height:14px;letter-spacing:-0.54px;">DR G GROBELAAR</span>
<span class="t b" style="left:821.5px;top:313.4px;font-size:13px;line-height:15px;letter-spacing:-0.29px;">MPOFU , M, MANDLA</span>
<span class="t" style="left:821.5px;top:331.4px;font-size:12.4px;line-height:14px;letter-spacing:-0.27px;">ACCICARE 1258964</span>
<span class="t" style="left:1372.4px;top:314.4px;font-size:12.4px;line-height:14px;letter-spacing:-0.38px;">HEADACHE</span>
<div class="bd" style="left:1647px;top:316.4px;width:26px;background:#aaaaaa">C</div>
<div class="bd" style="left:1675px;top:316.4px;width:27.1px;background:#dc3350">D</div>
<div class="bd" style="left:1704.8px;top:316.4px;width:25.2px;background:#aaaaaa">S</div>
<div class="bd" style="left:1732.9px;top:316.4px;width:22.3px;background:#aaaaaa">I</div>
<div class="bd" style="left:1757.9px;top:316.4px;width:25.3px;background:#00a65a">A</div>
<div class="bd" style="left:1785.8px;top:316.4px;width:26.2px;background:#dd4b39">V</div>
<div class="bd" style="left:1815px;top:316.4px;width:30.9px;background:#dd4b39"></div>
<svg style="left:1823.0px;top:320.8px" width="14.200" height="14.200" viewBox="0 0 16 16"><circle cx="8" cy="8" r="7.900" fill="#fff"/><circle cx="5.300" cy="6.400" r="1.100" fill="#dd4b39"/><circle cx="10.700" cy="6.400" r="1.100" fill="#dd4b39"/><path d="M4.700 12.100A3.900 3.900 0 0 1 11.300 12.100" fill="none" stroke="#dd4b39" stroke-width="1.100" stroke-linecap="round"/></svg>
<div class="bd" style="left:1849.100px;top:316.4px;width:28.700px;background:#3c8dbc"></div>
<svg style="left:1857.0px;top:321.7px" width="12.400" height="12.400" viewBox="0 0 16 16"><path d="M1.600 0H14.400A1.600 1.600 0 0 1 16 1.600V10.500H12A1.500 1.500 0 0 0 10.500 12V16H1.600A1.600 1.600 0 0 1 0 14.400V1.600A1.600 1.600 0 0 1 1.600 0z" fill="#fff"/><path d="M11.600 16V12.200a.6.600 0 0 1 .6-.6H16z" fill="#fff"/></svg>
<div style="position:absolute;left:50.0px;top:349.0px;width:1852.0px;height:39.0px;background:#ece7df;"></div>
<div style="position:absolute;left:50.0px;top:348.0px;width:1851.0px;height:1.0px;background:#dcdcdc;"></div>
<div style="position:absolute;left:50.0px;top:350.0px;width:1851.0px;height:38.0px;background:#6069f8;"></div>
<div style="position:absolute;left:60.0px;top:350.0px;width:79.0px;height:38.0px;background:#5956a8;"></div>
<div style="position:absolute;left:1883.0px;top:350.0px;width:18.0px;height:38.0px;background:#5956a8;"></div>
<span class="t" style="left:60.0px;top:353.4px;font-size:13px;line-height:15px;letter-spacing:0.29px;">Invoiced</span>
<span class="t" style="left:60.0px;top:371.4px;font-size:13px;line-height:15px;letter-spacing:0.42px;">Telemed</span>
<span class="t" style="left:139.2px;top:354.4px;font-size:12.4px;line-height:14px;letter-spacing:-0.13px;">GPD183</span>
<svg style="left:185.7px;top:353.0px" width="10" height="13.800" viewBox="0 0 10 13.800"><path d="M1.700.55H6.300L9.450 3.700V12.100a1.150 1.150 0 0 1-1.150 1.150H1.700A1.150 1.150 0 0 1 .55 12.100V1.700A1.150 1.150 0 0 1 1.700.55z" fill="none" stroke="#0e0f12" stroke-width="1.100"/><path d="M6.100.4L9.600 3.900H6.100z" fill="#0e0f12"/><path d="M2.500 7.300h5" stroke="#0e0f12" stroke-width="1"/><path d="M2.500 10.100h5" stroke="#0e0f12" stroke-opacity=".6" stroke-width="1.400"/></svg>
<span class="t" style="left:197.3px;top:354.4px;font-size:12.4px;line-height:14px;letter-spacing:0.11px;">FN00000094</span>
<span class="t b" style="left:270.6px;top:353.4px;font-size:13px;line-height:15px;letter-spacing:-0.36px;">MR ANDERSON, J, JAMES</span>
<span class="t" style="left:270.6px;top:371.4px;font-size:13px;line-height:15px;letter-spacing:-0.15px;">+15551234567 Male Age: 40 years</span>
<span class="t" style="left:546.1px;top:354.4px;font-size:12.4px;line-height:14px;letter-spacing:-0.32px;">PRACTITIONER:</span>
<span class="t" style="left:546.1px;top:372.4px;font-size:12.4px;line-height:14px;letter-spacing:-0.54px;">DR G GROBELAAR</span>
<span class="t b" style="left:821.5px;top:353.4px;font-size:13px;line-height:15px;letter-spacing:-0.36px;">ANDERSON, J, JAMES</span>
<span class="t" style="left:821.5px;top:372.4px;font-size:12.4px;line-height:14px;letter-spacing:-0.25px;">AECI CAPTIVE INSURANCE BC123456789</span>
<span class="t" style="left:1372.4px;top:354.4px;font-size:12.4px;line-height:14px;letter-spacing:-0.29px;">MEETING WITH MEDICAL REP</span>
<div class="bd" style="left:1647px;top:356.9px;width:26px;background:#aaaaaa">C</div>
<div class="bd" style="left:1675px;top:356.9px;width:27.1px;background:#dc3350">D</div>
<div class="bd" style="left:1704.8px;top:356.9px;width:25.2px;background:#aaaaaa">S</div>
<div class="bd" style="left:1732.9px;top:356.9px;width:22.3px;background:#aaaaaa">I</div>
<div class="bd" style="left:1757.9px;top:356.9px;width:25.3px;background:#00a65a">A</div>
<div class="bd" style="left:1785.8px;top:356.9px;width:26.2px;background:#ff7701">V</div>
<div class="bd" style="left:1815px;top:356.9px;width:30.9px;background:#dd4b39"></div>
<svg style="left:1823.0px;top:361.3px" width="14.200" height="14.200" viewBox="0 0 16 16"><circle cx="8" cy="8" r="7.900" fill="#fff"/><circle cx="5.300" cy="6.400" r="1.100" fill="#dd4b39"/><circle cx="10.700" cy="6.400" r="1.100" fill="#dd4b39"/><path d="M4.700 12.100A3.900 3.900 0 0 1 11.300 12.100" fill="none" stroke="#dd4b39" stroke-width="1.100" stroke-linecap="round"/></svg>
<div class="bd" style="left:1849.100px;top:356.9px;width:28.700px;background:#3c8dbc"></div>
<svg style="left:1857.0px;top:362.2px" width="12.400" height="12.400" viewBox="0 0 16 16"><path d="M1.600 0H14.400A1.600 1.600 0 0 1 16 1.600V10.500H12A1.500 1.500 0 0 0 10.500 12V16H1.600A1.600 1.600 0 0 1 0 14.400V1.600A1.600 1.600 0 0 1 1.600 0z" fill="#fff"/><path d="M11.600 16V12.200a.6.600 0 0 1 .6-.6H16z" fill="#fff"/></svg>
<div style="position:absolute;left:50.0px;top:389.0px;width:1852.0px;height:40.0px;background:#ece7df;"></div>
<div style="position:absolute;left:50.0px;top:388.0px;width:1851.0px;height:1.0px;background:#dcdcdc;"></div>
<div style="position:absolute;left:50.0px;top:390.0px;width:1851.0px;height:39.0px;background:#ec5fe0;"></div>
<div style="position:absolute;left:60.0px;top:390.0px;width:79.0px;height:39.0px;background:#1783c9;"></div>
<div style="position:absolute;left:1883.0px;top:390.0px;width:18.0px;height:39.0px;background:#1783c9;"></div>
<span class="t" style="left:60.0px;top:394.4px;font-size:13px;line-height:15px;letter-spacing:0.21px;">Arrived</span>
<span class="t" style="left:60.0px;top:411.4px;font-size:13px;line-height:15px;letter-spacing:0.36px;">Consultation</span>
<span class="t" style="left:139.2px;top:395.4px;font-size:12.4px;line-height:14px;letter-spacing:-0.13px;">GPD245</span>
<svg style="left:185.7px;top:394.0px" width="10" height="13.800" viewBox="0 0 10 13.800"><path d="M1.700.55H6.300L9.450 3.700V12.100a1.150 1.150 0 0 1-1.150 1.150H1.700A1.150 1.150 0 0 1 .55 12.100V1.700A1.150 1.150 0 0 1 1.700.55z" fill="none" stroke="#0e0f12" stroke-width="1.100"/><path d="M6.100.4L9.600 3.900H6.100z" fill="#0e0f12"/><path d="M2.500 7.300h5" stroke="#0e0f12" stroke-width="1"/><path d="M2.500 10.100h5" stroke="#0e0f12" stroke-opacity=".6" stroke-width="1.400"/></svg>
<span class="t" style="left:197.3px;top:395.4px;font-size:12.4px;line-height:14px;letter-spacing:0.11px;">FN00000157</span>
<span class="t b" style="left:270.6px;top:394.4px;font-size:13px;line-height:15px;letter-spacing:-0.30px;">MS TAYLOR , J, JORDAN</span>
<span class="t" style="left:270.6px;top:411.4px;font-size:13px;line-height:15px;letter-spacing:-0.12px;">0817650595 Female Age: 37 years</span>
<span class="t" style="left:546.1px;top:395.4px;font-size:12.4px;line-height:14px;letter-spacing:-0.32px;">PRACTITIONER:</span>
<span class="t" style="left:546.1px;top:412.4px;font-size:12.4px;line-height:14px;letter-spacing:-0.54px;">DR G GROBELAAR</span>
<span class="t b" style="left:821.5px;top:394.4px;font-size:13px;line-height:15px;letter-spacing:-0.27px;">TAYLOR , J, JORDAN</span>
<span class="t" style="left:821.5px;top:412.4px;font-size:12.4px;line-height:14px;letter-spacing:-0.21px;">DISCOVERY 8157895641</span>
<div class="bd" style="left:1647px;top:397.4px;width:26px;background:#aaaaaa">C</div>
<div class="bd" style="left:1675px;top:397.4px;width:27.1px;background:#dc3350">D</div>
<div class="bd" style="left:1704.8px;top:397.4px;width:25.2px;background:#aaaaaa">S</div>
<div class="bd" style="left:1732.9px;top:397.4px;width:22.3px;background:#aaaaaa">I</div>
<div class="bd" style="left:1757.9px;top:397.4px;width:25.3px;background:#00a65a">A</div>
<div class="bd" style="left:1785.8px;top:397.4px;width:26.2px;background:#ff7701">V</div>
<div class="bd" style="left:1815px;top:397.4px;width:30.9px;background:#dd4b39"></div>
<svg style="left:1823.0px;top:401.8px" width="14.200" height="14.200" viewBox="0 0 16 16"><circle cx="8" cy="8" r="7.900" fill="#fff"/><circle cx="5.300" cy="6.400" r="1.100" fill="#dd4b39"/><circle cx="10.700" cy="6.400" r="1.100" fill="#dd4b39"/><path d="M4.700 12.100A3.900 3.900 0 0 1 11.300 12.100" fill="none" stroke="#dd4b39" stroke-width="1.100" stroke-linecap="round"/></svg>
<div class="bd" style="left:1849.100px;top:397.4px;width:28.700px;background:#3c8dbc"></div>
<svg style="left:1857.0px;top:402.7px" width="12.400" height="12.400" viewBox="0 0 16 16"><path d="M1.600 0H14.400A1.600 1.600 0 0 1 16 1.600V10.500H12A1.500 1.500 0 0 0 10.500 12V16H1.600A1.600 1.600 0 0 1 0 14.400V1.600A1.600 1.600 0 0 1 1.600 0z" fill="#fff"/><path d="M11.600 16V12.200a.6.600 0 0 1 .6-.6H16z" fill="#fff"/></svg>
<div style="position:absolute;left:50.0px;top:430.0px;width:1852.0px;height:39.0px;background:#ece7df;"></div>
<div style="position:absolute;left:50.0px;top:429.0px;width:1851.0px;height:1.0px;background:#dcdcdc;"></div>
<div style="position:absolute;left:50.0px;top:431.0px;width:1851.0px;height:38.0px;background:#6069f8;"></div>
<div style="position:absolute;left:60.0px;top:431.0px;width:79.0px;height:38.0px;background:#1783c9;"></div>
<div style="position:absolute;left:1883.0px;top:431.0px;width:18.0px;height:38.0px;background:#1783c9;"></div>
<span class="t" style="left:60.0px;top:434.4px;font-size:13px;line-height:15px;letter-spacing:0.29px;">Invoiced</span>
<span class="t" style="left:60.0px;top:452.4px;font-size:13px;line-height:15px;letter-spacing:0.36px;">Consultation</span>
<span class="t" style="left:139.2px;top:435.4px;font-size:12.4px;line-height:14px;letter-spacing:-0.13px;">GPD203</span>
<svg style="left:185.7px;top:434.0px" width="10" height="13.800" viewBox="0 0 10 13.800"><path d="M1.700.55H6.300L9.450 3.700V12.100a1.150 1.150 0 0 1-1.150 1.150H1.700A1.150 1.150 0 0 1 .55 12.100V1.700A1.150 1.150 0 0 1 1.700.55z" fill="none" stroke="#0e0f12" stroke-width="1.100"/><path d="M6.100.4L9.600 3.900H6.100z" fill="#0e0f12"/><path d="M2.500 7.300h5" stroke="#0e0f12" stroke-width="1"/><path d="M2.500 10.100h5" stroke="#0e0f12" stroke-opacity=".6" stroke-width="1.400"/></svg>
<span class="t" style="left:197.3px;top:435.4px;font-size:12.4px;line-height:14px;letter-spacing:0.20px;">FN00000115</span>
<span class="t b" style="left:270.6px;top:434.4px;font-size:13px;line-height:15px;letter-spacing:-0.48px;">MR STILLER, G, GREG</span>
<span class="t" style="left:270.6px;top:452.4px;font-size:13px;line-height:15px;letter-spacing:-0.02px;">08963254 Male Age: 3 months</span>
<span class="t" style="left:546.1px;top:435.4px;font-size:12.4px;line-height:14px;letter-spacing:-0.32px;">PRACTITIONER:</span>
<span class="t" style="left:546.1px;top:453.4px;font-size:12.4px;line-height:14px;letter-spacing:-0.54px;">DR G GROBELAAR</span>
<span class="t b" style="left:821.5px;top:434.4px;font-size:13px;line-height:15px;letter-spacing:-0.48px;">STILLER, G, GREG</span>
<span class="t" style="left:821.5px;top:453.4px;font-size:12.4px;line-height:14px;letter-spacing:0.05px;">BONITAS 1238954</span>
<div class="bd" style="left:1647px;top:437.9px;width:26px;background:#aaaaaa">C</div>
<div class="bd" style="left:1675px;top:437.9px;width:27.1px;background:#dc3350">D</div>
<div class="bd" style="left:1704.8px;top:437.9px;width:25.2px;background:#aaaaaa">S</div>
<div class="bd" style="left:1732.9px;top:437.9px;width:22.3px;background:#aaaaaa">I</div>
<div class="bd" style="left:1757.9px;top:437.9px;width:25.3px;background:#00a65a">A</div>
<div class="bd" style="left:1785.8px;top:437.9px;width:26.2px;background:#dd4b39">V</div>
<div class="bd" style="left:1815px;top:437.9px;width:30.9px;background:#dd4b39"></div>
<svg style="left:1823.0px;top:442.3px" width="14.200" height="14.200" viewBox="0 0 16 16"><circle cx="8" cy="8" r="7.900" fill="#fff"/><circle cx="5.300" cy="6.400" r="1.100" fill="#dd4b39"/><circle cx="10.700" cy="6.400" r="1.100" fill="#dd4b39"/><path d="M4.700 12.100A3.900 3.900 0 0 1 11.300 12.100" fill="none" stroke="#dd4b39" stroke-width="1.100" stroke-linecap="round"/></svg>
<div class="bd" style="left:1849.100px;top:437.9px;width:28.700px;background:#3c8dbc"></div>
<svg style="left:1857.0px;top:443.2px" width="12.400" height="12.400" viewBox="0 0 16 16"><path d="M1.600 0H14.400A1.600 1.600 0 0 1 16 1.600V10.500H12A1.500 1.500 0 0 0 10.500 12V16H1.600A1.600 1.600 0 0 1 0 14.400V1.600A1.600 1.600 0 0 1 1.600 0z" fill="#fff"/><path d="M11.600 16V12.200a.6.600 0 0 1 .6-.6H16z" fill="#fff"/></svg>
<div style="position:absolute;left:50.0px;top:592.0px;width:1852.0px;height:39.0px;background:#ece7df;"></div>
<div style="position:absolute;left:50.0px;top:591.0px;width:1851.0px;height:1.0px;background:#dcdcdc;"></div>
<div style="position:absolute;left:50.0px;top:593.0px;width:1851.0px;height:38.0px;background:#b48ef4;"></div>
<div style="position:absolute;left:60.0px;top:593.0px;width:79.0px;height:38.0px;background:#269f8a;"></div>
<div style="position:absolute;left:1883.0px;top:593.0px;width:18.0px;height:38.0px;background:#269f8a;"></div>
<span class="t" style="left:60.0px;top:596.4px;font-size:13px;line-height:15px;letter-spacing:0.11px;">Booking Con</span>
<span class="t" style="left:60.0px;top:614.4px;font-size:13px;line-height:15px;letter-spacing:0.53px;">firmed</span>
<span class="t" style="left:139.2px;top:597.4px;font-size:12.4px;line-height:14px;letter-spacing:-0.28px;">GPD5</span>
<svg style="left:171.6px;top:596.0px" width="10" height="13.800" viewBox="0 0 10 13.800"><path d="M1.700.55H6.300L9.450 3.700V12.100a1.150 1.150 0 0 1-1.150 1.150H1.700A1.150 1.150 0 0 1 .55 12.100V1.700A1.150 1.150 0 0 1 1.700.55z" fill="none" stroke="#0e0f12" stroke-width="1.100"/><path d="M6.100.4L9.600 3.900H6.100z" fill="#0e0f12"/><path d="M2.500 7.300h5" stroke="#0e0f12" stroke-width="1"/><path d="M2.500 10.100h5" stroke="#0e0f12" stroke-opacity=".6" stroke-width="1.400"/></svg>
<span class="t" style="left:183.2px;top:597.4px;font-size:12.4px;line-height:14px;letter-spacing:0.11px;">FN00000041</span>
<span class="t b" style="left:256.6px;top:596.4px;font-size:13px;line-height:15px;letter-spacing:-0.33px;">MS MOOREHOUSE, A, ANNE</span>
<span class="t" style="left:256.6px;top:614.4px;font-size:13px;line-height:15px;letter-spacing:-0.12px;">0645155899 Female Age: 55 years</span>
<span class="t" style="left:534.8px;top:597.4px;font-size:12.4px;line-height:14px;letter-spacing:-0.32px;">PRACTITIONER:</span>
<span class="t" style="left:534.8px;top:615.4px;font-size:12.4px;line-height:14px;letter-spacing:-0.54px;">DR G GROBELAAR</span>
<span class="t b" style="left:813.0px;top:596.4px;font-size:13px;line-height:15px;letter-spacing:-0.30px;">MOOREHOUSE, A, ANNE</span>
<span class="t" style="left:813.0px;top:615.4px;font-size:12.4px;line-height:14px;letter-spacing:-0.10px;">BESTMED 56255252</span>
<span class="t" style="left:1369.4px;top:597.4px;font-size:12.4px;line-height:14px;letter-spacing:-0.23px;">HEAD INJURY</span>
<div class="bd" style="left:1647px;top:599.9px;width:26px;background:#aaaaaa">C</div>
<div class="bd" style="left:1675px;top:599.9px;width:27.1px;background:#dc3350">D</div>
<div class="bd" style="left:1704.8px;top:599.9px;width:25.2px;background:#aaaaaa">S</div>
<div class="bd" style="left:1732.9px;top:599.9px;width:22.3px;background:#aaaaaa">I</div>
<div class="bd" style="left:1757.9px;top:599.9px;width:25.3px;background:#dd4b39">A</div>
<div class="bd" style="left:1785.8px;top:599.9px;width:26.2px;background:#ff7701">V</div>
<div class="bd" style="left:1815px;top:599.9px;width:30.9px;background:#dd4b39"></div>
<svg style="left:1823.0px;top:604.3px" width="14.200" height="14.200" viewBox="0 0 16 16"><circle cx="8" cy="8" r="7.900" fill="#fff"/><circle cx="5.300" cy="6.400" r="1.100" fill="#dd4b39"/><circle cx="10.700" cy="6.400" r="1.100" fill="#dd4b39"/><path d="M4.700 12.100A3.900 3.900 0 0 1 11.300 12.100" fill="none" stroke="#dd4b39" stroke-width="1.100" stroke-linecap="round"/></svg>
<div class="bd" style="left:1849.100px;top:599.9px;width:28.700px;background:#3c8dbc"></div>
<svg style="left:1857.0px;top:605.2px" width="12.400" height="12.400" viewBox="0 0 16 16"><path d="M1.600 0H14.400A1.600 1.600 0 0 1 16 1.600V10.500H12A1.500 1.500 0 0 0 10.500 12V16H1.600A1.600 1.600 0 0 1 0 14.400V1.600A1.600 1.600 0 0 1 1.600 0z" fill="#fff"/><path d="M11.600 16V12.200a.6.600 0 0 1 .6-.6H16z" fill="#fff"/></svg>
<div style="position:absolute;left:50.0px;top:673.0px;width:1852.0px;height:39.0px;background:#ece7df;"></div>
<div style="position:absolute;left:50.0px;top:672.0px;width:1851.0px;height:1.0px;background:#dcdcdc;"></div>
<div style="position:absolute;left:50.0px;top:674.0px;width:1851.0px;height:38.0px;background:#6069f8;"></div>
<div style="position:absolute;left:60.0px;top:674.0px;width:79.0px;height:38.0px;background:#1783c9;"></div>
<div style="position:absolute;left:1883.0px;top:674.0px;width:18.0px;height:38.0px;background:#1783c9;"></div>
<span class="t" style="left:60.0px;top:677.4px;font-size:13px;line-height:15px;letter-spacing:0.29px;">Invoiced</span>
<span class="t" style="left:60.0px;top:695.4px;font-size:13px;line-height:15px;letter-spacing:0.36px;">Consultation</span>
<span class="t" style="left:139.2px;top:678.4px;font-size:12.4px;line-height:14px;letter-spacing:-0.13px;">GPD150</span>
<svg style="left:185.7px;top:677.0px" width="10" height="13.800" viewBox="0 0 10 13.800"><path d="M1.700.55H6.300L9.450 3.700V12.100a1.150 1.150 0 0 1-1.150 1.150H1.700A1.150 1.150 0 0 1 .55 12.100V1.700A1.150 1.150 0 0 1 1.700.55z" fill="none" stroke="#0e0f12" stroke-width="1.100"/><path d="M6.100.4L9.600 3.900H6.100z" fill="#0e0f12"/><path d="M2.500 7.300h5" stroke="#0e0f12" stroke-width="1"/><path d="M2.500 10.100h5" stroke="#0e0f12" stroke-opacity=".6" stroke-width="1.400"/></svg>
<span class="t" style="left:197.3px;top:678.4px;font-size:12.4px;line-height:14px;letter-spacing:0.11px;">FN00000061</span>
<span class="t b" style="left:270.6px;top:677.4px;font-size:13px;line-height:15px;letter-spacing:-0.43px;">MR CORNELL, A, ANDREW</span>
<span class="t" style="left:270.6px;top:695.4px;font-size:13px;line-height:15px;letter-spacing:-0.14px;">0824574858 Male Age: 49 years</span>
<span class="t" style="left:546.1px;top:678.4px;font-size:12.4px;line-height:14px;letter-spacing:-0.32px;">PRACTITIONER:</span>
<span class="t" style="left:546.1px;top:696.4px;font-size:12.4px;line-height:14px;letter-spacing:-0.54px;">DR G GROBELAAR</span>
<span class="t b" style="left:821.5px;top:677.4px;font-size:13px;line-height:15px;letter-spacing:-0.43px;">CORNELL, A, ANDREW</span>
<span class="t" style="left:821.5px;top:696.4px;font-size:12.4px;line-height:14px;letter-spacing:-0.05px;">PRIVATE PATIENT 00</span>
<div class="bd" style="left:1647px;top:680.9px;width:26px;background:#aaaaaa">C</div>
<div class="bd" style="left:1675px;top:680.9px;width:27.1px;background:#dc3350">D</div>
<div class="bd" style="left:1704.8px;top:680.9px;width:25.2px;background:#aaaaaa">S</div>
<div class="bd" style="left:1732.9px;top:680.9px;width:22.3px;background:#aaaaaa">I</div>
<div class="bd" style="left:1757.9px;top:680.9px;width:25.3px;background:#00a65a">A</div>
<div class="bd" style="left:1785.8px;top:680.9px;width:26.2px;background:#dd4b39">V</div>
<div class="bd" style="left:1815px;top:680.9px;width:30.9px;background:#dd4b39"></div>
<svg style="left:1823.0px;top:685.3px" width="14.200" height="14.200" viewBox="0 0 16 16"><circle cx="8" cy="8" r="7.900" fill="#fff"/><circle cx="5.300" cy="6.400" r="1.100" fill="#dd4b39"/><circle cx="10.700" cy="6.400" r="1.100" fill="#dd4b39"/><path d="M4.700 12.100A3.900 3.900 0 0 1 11.300 12.100" fill="none" stroke="#dd4b39" stroke-width="1.100" stroke-linecap="round"/></svg>
<div class="bd" style="left:1849.100px;top:680.9px;width:28.700px;background:#3c8dbc"></div>
<svg style="left:1857.0px;top:686.2px" width="12.400" height="12.400" viewBox="0 0 16 16"><path d="M1.600 0H14.400A1.600 1.600 0 0 1 16 1.600V10.500H12A1.500 1.500 0 0 0 10.500 12V16H1.600A1.600 1.600 0 0 1 0 14.400V1.600A1.600 1.600 0 0 1 1.600 0z" fill="#fff"/><path d="M11.600 16V12.200a.6.600 0 0 1 .6-.6H16z" fill="#fff"/></svg>
<div style="position:absolute;left:50.0px;top:754.0px;width:1852.0px;height:39.0px;background:#ece7df;"></div>
<div style="position:absolute;left:50.0px;top:753.0px;width:1851.0px;height:1.0px;background:#dcdcdc;"></div>
<div style="position:absolute;left:50.0px;top:755.0px;width:1851.0px;height:38.0px;background:#6069f8;"></div>
<div style="position:absolute;left:60.0px;top:755.0px;width:79.0px;height:38.0px;background:#1783c9;"></div>
<div style="position:absolute;left:1883.0px;top:755.0px;width:18.0px;height:38.0px;background:#1783c9;"></div>
<span class="t" style="left:60.0px;top:758.4px;font-size:13px;line-height:15px;letter-spacing:0.29px;">Invoiced</span>
<span class="t" style="left:60.0px;top:776.4px;font-size:13px;line-height:15px;letter-spacing:0.36px;">Consultation</span>
<span class="t" style="left:139.2px;top:759.4px;font-size:12.4px;line-height:14px;letter-spacing:-0.13px;">GPD202</span>
<svg style="left:185.7px;top:758.0px" width="10" height="13.800" viewBox="0 0 10 13.800"><path d="M1.700.55H6.300L9.450 3.700V12.100a1.150 1.150 0 0 1-1.150 1.150H1.700A1.150 1.150 0 0 1 .55 12.100V1.700A1.150 1.150 0 0 1 1.700.55z" fill="none" stroke="#0e0f12" stroke-width="1.100"/><path d="M6.100.4L9.600 3.900H6.100z" fill="#0e0f12"/><path d="M2.500 7.300h5" stroke="#0e0f12" stroke-width="1"/><path d="M2.500 10.100h5" stroke="#0e0f12" stroke-opacity=".6" stroke-width="1.400"/></svg>
<span class="t" style="left:197.3px;top:759.4px;font-size:12.4px;line-height:14px;letter-spacing:0.20px;">FN00000114</span>
<span class="t b" style="left:270.6px;top:758.4px;font-size:13px;line-height:15px;letter-spacing:-0.32px;">MR MPOFU , M, MANDLA</span>
<span class="t" style="left:270.6px;top:776.4px;font-size:13px;line-height:15px;letter-spacing:-0.14px;">0733516086 Male Age: 36 years</span>
<span class="t" style="left:546.1px;top:759.4px;font-size:12.4px;line-height:14px;letter-spacing:-0.32px;">PRACTITIONER:</span>
<span class="t" style="left:546.1px;top:777.4px;font-size:12.4px;line-height:14px;letter-spacing:-0.54px;">DR G GROBELAAR</span>
<span class="t b" style="left:821.5px;top:758.4px;font-size:13px;line-height:15px;letter-spacing:-0.29px;">MPOFU , M, MANDLA</span>
<span class="t" style="left:821.5px;top:777.4px;font-size:12.4px;line-height:14px;letter-spacing:-0.27px;">ACCICARE 1258964</span>
<div class="bd" style="left:1647px;top:761.9px;width:26px;background:#aaaaaa">C</div>
<div class="bd" style="left:1675px;top:761.9px;width:27.1px;background:#dc3350">D</div>
<div class="bd" style="left:1704.8px;top:761.9px;width:25.2px;background:#aaaaaa">S</div>
<div class="bd" style="left:1732.9px;top:761.9px;width:22.3px;background:#aaaaaa">I</div>
<div class="bd" style="left:1757.9px;top:761.9px;width:25.3px;background:#00a65a">A</div>
<div class="bd" style="left:1785.8px;top:761.9px;width:26.2px;background:#dd4b39">V</div>
<div class="bd" style="left:1815px;top:761.9px;width:30.9px;background:#dd4b39"></div>
<svg style="left:1823.0px;top:766.3px" width="14.200" height="14.200" viewBox="0 0 16 16"><circle cx="8" cy="8" r="7.900" fill="#fff"/><circle cx="5.300" cy="6.400" r="1.100" fill="#dd4b39"/><circle cx="10.700" cy="6.400" r="1.100" fill="#dd4b39"/><path d="M4.700 12.100A3.900 3.900 0 0 1 11.300 12.100" fill="none" stroke="#dd4b39" stroke-width="1.100" stroke-linecap="round"/></svg>
<div class="bd" style="left:1849.100px;top:761.9px;width:28.700px;background:#3c8dbc"></div>
<svg style="left:1857.0px;top:767.2px" width="12.400" height="12.400" viewBox="0 0 16 16"><path d="M1.600 0H14.400A1.600 1.600 0 0 1 16 1.600V10.500H12A1.500 1.500 0 0 0 10.500 12V16H1.600A1.600 1.600 0 0 1 0 14.400V1.600A1.600 1.600 0 0 1 1.600 0z" fill="#fff"/><path d="M11.600 16V12.200a.6.600 0 0 1 .6-.6H16z" fill="#fff"/></svg>
<div style="position:absolute;left:50.0px;top:997.0px;width:1852.0px;height:39.0px;background:#ece7df;"></div>
<div style="position:absolute;left:50.0px;top:996.0px;width:1851.0px;height:1.0px;background:#dcdcdc;"></div>
<div style="position:absolute;left:50.0px;top:998.0px;width:1851.0px;height:38.0px;background:#b2d2f5;"></div>
<div style="position:absolute;left:60.0px;top:998.0px;width:79.0px;height:38.0px;background:#1783c9;"></div>
<div style="position:absolute;left:1883.0px;top:998.0px;width:18.0px;height:38.0px;background:#1783c9;"></div>
<span class="t" style="left:60.0px;top:1001.4px;font-size:13px;line-height:15px;letter-spacing:0.27px;">Booked</span>
<span class="t" style="left:60.0px;top:1019.4px;font-size:13px;line-height:15px;letter-spacing:0.36px;">Consultation</span>
<span class="t" style="left:139.2px;top:1002.4px;font-size:12.4px;line-height:14px;letter-spacing:-0.13px;">GPD212</span>
<svg style="left:185.7px;top:1001.0px" width="10" height="13.800" viewBox="0 0 10 13.800"><path d="M1.700.55H6.300L9.450 3.700V12.100a1.150 1.150 0 0 1-1.150 1.150H1.700A1.150 1.150 0 0 1 .55 12.100V1.700A1.150 1.150 0 0 1 1.700.55z" fill="none" stroke="#0e0f12" stroke-width="1.100"/><path d="M6.100.4L9.600 3.900H6.100z" fill="#0e0f12"/><path d="M2.500 7.300h5" stroke="#0e0f12" stroke-width="1"/><path d="M2.500 10.100h5" stroke="#0e0f12" stroke-opacity=".6" stroke-width="1.400"/></svg>
<span class="t" style="left:197.3px;top:1002.4px;font-size:12.4px;line-height:14px;letter-spacing:0.11px;">FN00000124</span>
<span class="t b" style="left:270.6px;top:1001.4px;font-size:13px;line-height:15px;letter-spacing:-0.49px;">MR OLCKERS, B, BERNARD</span>
<span class="t" style="left:270.6px;top:1019.4px;font-size:13px;line-height:15px;letter-spacing:-0.14px;">0829257256 Male Age: 42 years</span>
<span class="t" style="left:546.1px;top:1002.4px;font-size:12.4px;line-height:14px;letter-spacing:-0.32px;">PRACTITIONER:</span>
<span class="t" style="left:546.1px;top:1020.4px;font-size:12.4px;line-height:14px;letter-spacing:-0.54px;">DR G GROBELAAR</span>
<span class="t b" style="left:821.5px;top:1001.4px;font-size:13px;line-height:15px;letter-spacing:-0.50px;">OLCKERS, B, BERNARD</span>
<span class="t" style="left:821.5px;top:1020.4px;font-size:12.4px;line-height:14px;letter-spacing:-0.27px;">DISCOVERY LIFE 83050907</span>
<div class="bd" style="left:1647px;top:1004.9px;width:26px;background:#aaaaaa">C</div>
<div class="bd" style="left:1675px;top:1004.9px;width:27.1px;background:#dc3350">D</div>
<div class="bd" style="left:1704.8px;top:1004.9px;width:25.2px;background:#aaaaaa">S</div>
<div class="bd" style="left:1732.9px;top:1004.9px;width:22.3px;background:#aaaaaa">I</div>
<div class="bd" style="left:1757.9px;top:1004.9px;width:25.3px;background:#00a65a">A</div>
<div class="bd" style="left:1785.8px;top:1004.9px;width:26.2px;background:#dd4b39">V</div>
<div class="bd" style="left:1815px;top:1004.9px;width:30.9px;background:#dd4b39"></div>
<svg style="left:1823.0px;top:1009.3px" width="14.200" height="14.200" viewBox="0 0 16 16"><circle cx="8" cy="8" r="7.900" fill="#fff"/><circle cx="5.300" cy="6.400" r="1.100" fill="#dd4b39"/><circle cx="10.700" cy="6.400" r="1.100" fill="#dd4b39"/><path d="M4.700 12.100A3.900 3.900 0 0 1 11.300 12.100" fill="none" stroke="#dd4b39" stroke-width="1.100" stroke-linecap="round"/></svg>
<div class="bd" style="left:1849.100px;top:1004.9px;width:28.700px;background:#3c8dbc"></div>
<svg style="left:1857.0px;top:1010.2px" width="12.400" height="12.400" viewBox="0 0 16 16"><path d="M1.600 0H14.400A1.600 1.600 0 0 1 16 1.600V10.500H12A1.500 1.500 0 0 0 10.500 12V16H1.600A1.600 1.600 0 0 1 0 14.400V1.600A1.600 1.600 0 0 1 1.600 0z" fill="#fff"/><path d="M11.600 16V12.200a.6.600 0 0 1 .6-.6H16z" fill="#fff"/></svg>
<div style="position:absolute;left:50.0px;top:835.0px;width:1852.0px;height:120.0px;background:#ece7df;"></div>
<div style="position:absolute;left:50.0px;top:834.0px;width:1851.0px;height:1.0px;background:#dcdcdc;"></div>
<div style="position:absolute;left:50.0px;top:836.0px;width:1851.0px;height:119.0px;background:#72a0b4;"></div>
<span class="t b" style="left:406.8px;top:839.4px;font-size:13px;line-height:15px;letter-spacing:-0.02px;">Anaesthesiologist:</span>
<span class="t b" style="left:406.8px;top:857.3px;font-size:13px;line-height:15px;letter-spacing:-0.33px;">DR N NDLOVU</span>
<span class="t b" style="left:759.6px;top:839.4px;font-size:13px;line-height:15px;letter-spacing:0.04px;">Procedure Description:</span>
<span class="t" style="left:759.6px;top:858.3px;font-size:12.4px;line-height:14px;letter-spacing:-0.26px;">TONSILECTOMY</span>
<span class="t b" style="left:1112.2px;top:839.4px;font-size:13px;line-height:15px;letter-spacing:0.04px;">Notes:</span>
<div style="position:absolute;left:1465px;top:838px;width:397.6px;height:27px;background:#f39c12;border:1px solid #e08e0b;border-radius:3px;box-sizing:border-box"></div>
<div style="position:absolute;left:1498.0px;top:838.0px;width:1.0px;height:27.0px;background:#e08e0b;"></div>
<div style="position:absolute;left:1529.0px;top:838.0px;width:1.0px;height:27.0px;background:#e08e0b;"></div>
<div style="position:absolute;left:1569.0px;top:838.0px;width:1.0px;height:27.0px;background:#e08e0b;"></div>
<div style="position:absolute;left:1692.0px;top:838.0px;width:1.0px;height:27.0px;background:#e08e0b;"></div>
<span class="t b ns" style="left:1475.2px;top:846.8px;font-size:9.7px;line-height:11px;letter-spacing:-0.69px;color:#fff;">Est</span>
<span class="t b ns" style="left:1507.6px;top:846.8px;font-size:9.7px;line-height:11px;letter-spacing:-0.43px;color:#fff;">PC</span>
<span class="t b ns" style="left:1538.6px;top:846.8px;font-size:9.7px;line-height:11px;letter-spacing:-0.12px;color:#fff;">Auth</span>
<span class="t b ns" style="left:1579.4px;top:846.8px;font-size:9.7px;line-height:11px;letter-spacing:-0.21px;color:#fff;">Managed Care Consent</span>
<span class="t b ns" style="left:1702.0px;top:846.8px;font-size:9.7px;line-height:11px;letter-spacing:-0.39px;color:#fff;">PAIN AND SYMPTOMS INDICATION</span>
<div style="position:absolute;left:1872.2px;top:841.3px;width:23.4px;height:25.4px;background:#dd4b39;border:1px solid #d73925;box-sizing:border-box;border-radius:3px"></div>
<svg style="left:1880.2px;top:850.3px" width="7.600" height="7.600" viewBox="0 0 8 8"><path d="M1 1L7 7M7 1L1 7" stroke="#fff" stroke-width="1.900" stroke-linecap="round"/></svg>
</main>
<div class="scrollbar">
<div style="position:absolute;left:1905.0px;top:96.5px;width:15.0px;height:984.0px;background:#fafafa;"></div>
<div style="position:absolute;left:1908px;top:114px;width:9px;height:709.500px;border-radius:4.500px;background:#8e8e8e"></div>
<svg style="left:1908px;top:101.800px" width="9" height="5" viewBox="0 0 9 5"><path d="M4.500 0L9 5H0z" fill="#8e8e8e"/></svg>
<svg style="left:1908px;top:1068.2px" width="9" height="5" viewBox="0 0 9 5"><path d="M0 0H9L4.500 5z" fill="#8e8e8e"/></svg>
</div>
</body></html>
